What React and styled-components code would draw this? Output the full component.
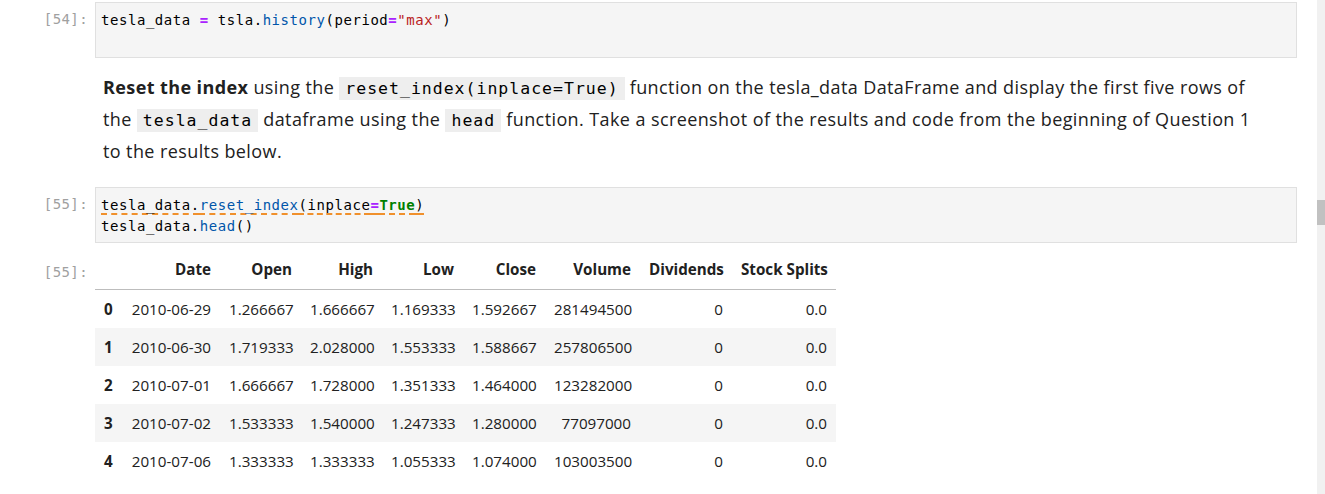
import React from 'react'
import styled, { createGlobalStyle } from 'styled-components'

const GlobalStyle = createGlobalStyle`
  html, body {
    margin: 0;
    padding: 0;
    background: #ffffff;
  }
  body {
    font-family: "Open Sans", "Noto Sans", sans-serif;
    color: #212121;
  }
`

const rows = [
  ['0', '2010-06-29', '1.266667', '1.666667', '1.169333', '1.592667', '281494500', '0', '0.0'],
  ['1', '2010-06-30', '1.719333', '2.028000', '1.553333', '1.588667', '257806500', '0', '0.0'],
  ['2', '2010-07-01', '1.666667', '1.728000', '1.351333', '1.464000', '123282000', '0', '0.0'],
  ['3', '2010-07-02', '1.533333', '1.540000', '1.247333', '1.280000', '77097000', '0', '0.0'],
  ['4', '2010-07-06', '1.333333', '1.333333', '1.055333', '1.074000', '103003500', '0', '0.0'],
]

const columns = ['Date', 'Open', 'High', 'Low', 'Close', 'Volume', 'Dividends', 'Stock Splits']
const widths = [25, 100, 81, 81, 81, 82, 95, 92, 104]

function App() {
  return (
    <Page>
      <GlobalStyle />
      <Notebook>
        <Cell top={2}>
          <Prompt>[54]:</Prompt>
          <CodeBox>
            <CodeLine>
              tesla_data <Op>=</Op> tsla.<Attr>history</Attr>(period<Op>=</Op><Str>"max"</Str>)
            </CodeLine>
            <CodeLine>&nbsp;</CodeLine>
          </CodeBox>
        </Cell>

        <Cell top={14}>
          <Prompt />
          <Markdown>
            <b>Reset the index</b> using the <InlineCode>reset_index(inplace=True)</InlineCode> function on
            the tesla_data DataFrame and display the first five rows of the{' '}
            <InlineCode>tesla_data</InlineCode> dataframe using the <InlineCode>head</InlineCode> function.
            Take a screenshot of the results and code from the beginning of Question 1 to the results below.
          </Markdown>
        </Cell>

        <Cell top={20}>
          <Prompt>[55]:</Prompt>
          <CodeBox>
            <CodeLine>
              <Lint>
                tesla_data.<Attr>reset_index</Attr>(inplace<Op>=</Op><Kw>True</Kw>)
              </Lint>
            </CodeLine>
            <CodeLine>
              tesla_data.<Attr>head</Attr>()
            </CodeLine>
          </CodeBox>
        </Cell>

        <Cell top={12}>
          <Prompt>[55]:</Prompt>
          <Output>
            <Frame>
              <colgroup>
                {widths.map((w, i) => (
                  <col key={i} style={{ width: w }} />
                ))}
              </colgroup>
              <thead>
                <tr>
                  <HeadCell />
                  {columns.map((c) => (
                    <HeadCell key={c}>{c}</HeadCell>
                  ))}
                </tr>
              </thead>
              <tbody>
                {rows.map((r, i) => (
                  <Row key={r[0]} striped={i % 2 === 1}>
                    <IndexCell>{r[0]}</IndexCell>
                    {r.slice(1).map((v, j) => (
                      <DataCell key={j}>{v}</DataCell>
                    ))}
                  </Row>
                ))}
              </tbody>
            </Frame>
          </Output>
        </Cell>
      </Notebook>

      <ScrollTrack>
        <ScrollThumb />
      </ScrollTrack>
    </Page>
  )
}

export default App

const Page = styled.div`
  display: flex;
  width: 1325px;
  height: 494px;
  overflow: hidden;
`

const Notebook = styled.div`
  flex: 1;
  padding-right: 20px;
  display: flex;
  flex-direction: column;
`

const Cell = styled.div`
  display: flex;
  align-items: flex-start;
  margin-top: ${(p) => p.top}px;
`

const Prompt = styled.div`
  flex: 0 0 88px;
  padding-right: 7px;
  text-align: right;
  font-family: "DejaVu Sans Mono", monospace;
  font-size: 14px;
  letter-spacing: 0.4px;
  line-height: 21px;
  padding-top: 7px;
  color: #a0a0a0;
`

const CodeBox = styled.div`
  flex: 1;
  height: 56px;
  box-sizing: border-box;
  background: #f5f5f5;
  border: 1px solid #e0e0e0;
  padding: 7px 5px;
  font-family: "DejaVu Sans Mono", monospace;
  font-size: 14px;
  letter-spacing: 0.55px;
  line-height: 21px;
  color: #000000;
`

const CodeLine = styled.div`
  white-space: pre;
`

const Op = styled.span`
  color: #aa22ff;
  font-weight: bold;
`

const Attr = styled.span`
  color: #0055aa;
`

const Str = styled.span`
  color: #ba2121;
`

const Kw = styled.span`
  color: #008000;
  font-weight: bold;
`

const Lint = styled.span`
  text-decoration: underline dashed #f0902c;
  text-decoration-thickness: 2px;
  text-underline-offset: 3px;
`

const Markdown = styled.div`
  flex: 1;
  padding-left: 8px;
  padding-right: 35px;
  font-size: 18px;
  letter-spacing: 0.4px;
  line-height: 31px;
  color: #212121;

  b {
    font-weight: 700;
  }
`

const InlineCode = styled.code`
  font-family: "DejaVu Sans Mono", monospace;
  font-size: 16.5px;
  letter-spacing: 1px;
  background: #eeeeee;
  padding: 2px 6px;
  color: #000000;
`

const Output = styled.div`
  flex: 1;
`

const Frame = styled.table`
  table-layout: fixed;
  width: 741px;
  border-collapse: collapse;
  font-size: 15.2px;
  color: #212121;
`

const HeadCell = styled.th`
  text-align: right;
  font-weight: 700;
  padding: 0 9px;
  height: 34px;
  vertical-align: top;
  line-height: 28px;
  border-bottom: 1px solid #bdbdbd;
  white-space: nowrap;
`

const Row = styled.tr`
  background: ${(p) => (p.striped ? '#f5f5f5' : '#ffffff')};
  height: 38px;
`

const IndexCell = styled.th`
  text-align: left;
  font-weight: 700;
  padding: 0 9px;
`

const DataCell = styled.td`
  text-align: right;
  padding: 0 9px;
  white-space: nowrap;
`

const ScrollTrack = styled.div`
  flex: 0 0 8px;
  background: #f1f1f1;
  display: flex;
  flex-direction: column;
`

const ScrollThumb = styled.div`
  margin-top: 200px;
  height: 25px;
  background: #c1c1c1;
`
